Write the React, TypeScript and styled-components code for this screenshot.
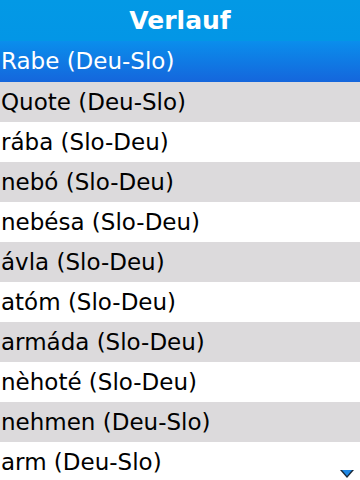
import { createGlobalStyle, styled } from 'styled-components'

const entries = [
  'Rabe (Deu-Slo)',
  'Quote (Deu-Slo)',
  'rába (Slo-Deu)',
  'nebó (Slo-Deu)',
  'nebésa (Slo-Deu)',
  'ávla (Slo-Deu)',
  'atóm (Slo-Deu)',
  'armáda (Slo-Deu)',
  'nèhoté (Slo-Deu)',
  'nehmen (Deu-Slo)',
  'arm (Deu-Slo)',
]

const GlobalStyle = createGlobalStyle`
  html, body {
    margin: 0;
    padding: 0;
    background: #ffffff;
  }
  body {
    font-family: "DejaVu Sans", "Liberation Sans", sans-serif;
  }
`

export default function App() {
  return (
    <>
      <GlobalStyle />
      <Screen>
        <Header>Verlauf</Header>
        <List>
          {entries.map((entry, i) => (
            <Row key={entry} $selected={i === 0} $striped={i % 2 === 1}>
              {entry}
            </Row>
          ))}
        </List>
        <ScrollArrow />
      </Screen>
    </>
  )
}

const Screen = styled.div`
  position: relative;
  width: 360px;
  height: 480px;
  overflow: hidden;
  background: #ffffff;
`

const Header = styled.div`
  height: 41px;
  line-height: 41px;
  text-align: center;
  font-size: 25px;
  font-weight: bold;
  color: #ffffff;
  background: linear-gradient(#0399e5, #0396e6);
`

const List = styled.div`
  display: flex;
  flex-direction: column;
`

const Row = styled.div<{ $selected: boolean; $striped: boolean }>`
  height: 40px;
  line-height: 40px;
  padding-left: 1px;
  font-size: 23px;
  white-space: nowrap;
  color: ${(p) => (p.$selected ? '#ffffff' : '#000000')};
  background: ${(p) =>
    p.$selected
      ? 'linear-gradient(#0a8eec, #1566dc)'
      : p.$striped
        ? '#dcdadc'
        : '#ffffff'};

  &:first-child {
    height: 41px;
  }
`

const ScrollArrow = styled.div`
  position: absolute;
  right: 6px;
  bottom: 2px;
  width: 0;
  height: 0;
  border-left: 7px solid transparent;
  border-right: 7px solid transparent;
  border-top: 8px solid #1a2a3a;

  &::after {
    content: '';
    position: absolute;
    left: -5px;
    top: -8px;
    border-left: 5px solid transparent;
    border-right: 5px solid transparent;
    border-top: 6px solid #1e88e5;
  }
`
